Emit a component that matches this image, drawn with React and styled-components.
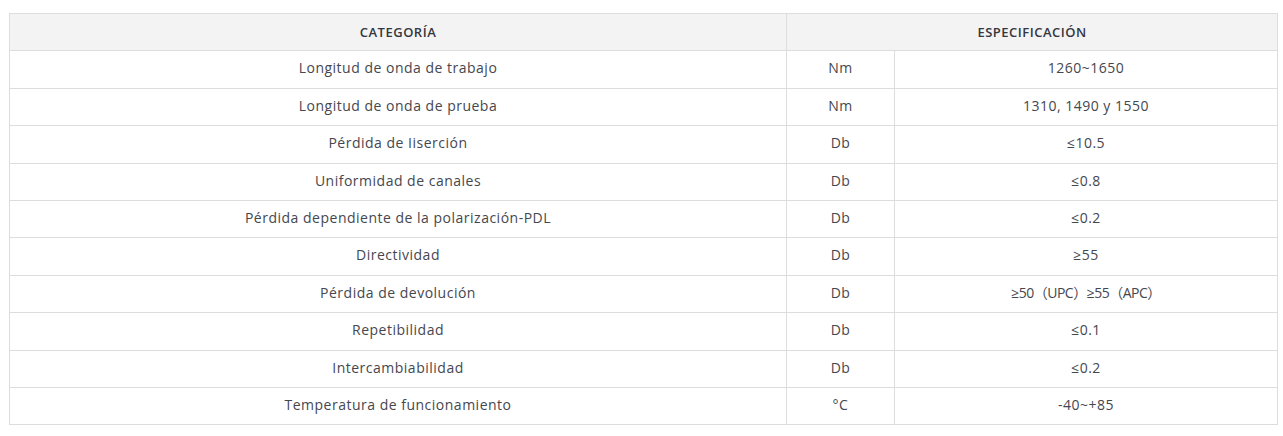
import React from "react";
import styled, { createGlobalStyle } from "styled-components";

const GlobalStyle = createGlobalStyle`
  html, body { margin: 0; padding: 0; background: #fff; }
  body { font-family: "Open Sans", "Liberation Sans", "Noto Sans CJK SC", sans-serif; }
`;

const Wrap = styled.div`
  padding: 13px 0 0 9px;
  width: 1268px;
`;

const Table = styled.table`
  width: 1268px;
  border-collapse: collapse;
  table-layout: fixed;
  border: 1px solid #dddddd;
`;

const Col = styled.col`
  width: ${(p) => p.$w}px;
`;

const Th = styled.th`
  background: #f3f3f3;
  border: 1px solid #dddddd;
  padding: 7px 8px;
  line-height: 22.4px;
  font-size: 13px;
  font-weight: 600;
  letter-spacing: 0.5px;
  color: #343740;
  text-align: center;
  text-transform: uppercase;
`;

const Td = styled.td`
  border: 1px solid #dddddd;
  padding: 6px 8px 8px;
  line-height: 22.4px;
  font-size: 14px;
  font-weight: 400;
  letter-spacing: ${(p) => (p.$tight ? "-0.5px" : "0.5px")};
  color: #45474f;
  text-align: center;
`;

const rows = [
  ["Longitud de onda de trabajo", "Nm", "1260~1650"],
  ["Longitud de onda de prueba", "Nm", "1310, 1490 y 1550"],
  ["Pérdida de Iiserción", "Db", "≤10.5"],
  ["Uniformidad de canales", "Db", "≤0.8"],
  ["Pérdida dependiente de la polarización-PDL", "Db", "≤0.2"],
  ["Directividad", "Db", "≥55"],
  ["Pérdida de devolución", "Db", "≥50（UPC）≥55（APC）", true],
  ["Repetibilidad", "Db", "≤0.1"],
  ["Intercambiabilidad", "Db", "≤0.2"],
  ["Temperatura de funcionamiento", "°C", "-40~+85"],
];

export default function App() {
  return (
    <>
      <GlobalStyle />
      <Wrap>
        <Table>
          <colgroup>
            <Col $w={777} />
            <Col $w={108} />
            <Col $w={383} />
          </colgroup>
          <thead>
            <tr>
              <Th>Categoría</Th>
              <Th colSpan={2}>Especificación</Th>
            </tr>
          </thead>
          <tbody>
            {rows.map((r) => (
              <tr key={r[0]}>
                <Td>{r[0]}</Td>
                <Td>{r[1]}</Td>
                <Td $tight={r[3]}>{r[2]}</Td>
              </tr>
            ))}
          </tbody>
        </Table>
      </Wrap>
    </>
  );
}
